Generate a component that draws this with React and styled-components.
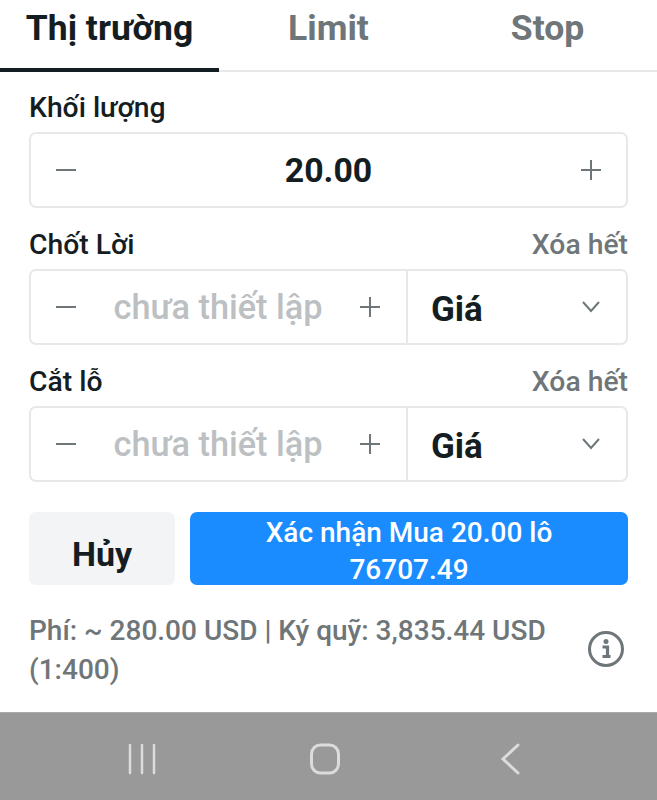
import React from "react";
import styled, { createGlobalStyle } from "styled-components";

const Global = createGlobalStyle`
  html, body { margin: 0; padding: 0; background: #fff; }
  * { box-sizing: border-box; }
`;
const Page = styled.div`
  width: 657px; height: 800px; display: flex; flex-direction: column;
  font-family: Roboto, "Noto Sans", sans-serif; color: #141d22; overflow: hidden; background: #fff;
`;
const Tabs = styled.div`
  display: grid; grid-template-columns: repeat(3, 1fr); height: 72px; border-bottom: 2px solid #e6e8ea;
`;
const Tab = styled.div`
  height: 72px; padding-top: 6px; text-align: center; font-size: 35.5px; line-height: 44px; font-weight: 700;
  color: ${p => (p.$active ? "#141d22" : "#6f7679")};
  border-bottom: ${p => (p.$active ? "4px solid #141d22" : "none")};
`;
const Content = styled.div`
  flex: 1; padding: 16px 29px 0; display: flex; flex-direction: column;
`;
const LabelRow = styled.div`
  display: flex; justify-content: space-between; align-items: center; height: 44px; padding: 0 0 5px 0; font-size: 28.3px; font-weight: 500;
`;
const Clear = styled.span` color: #6f7679; `;
const Box = styled.div`
  height: 76px; margin-bottom: 17px; border: 2px solid #e6e8ea; border-radius: 7px; display: flex; align-items: center;
`;
const Stepper = styled.div`
  flex: 1; height: 100%; display: flex; align-items: center; justify-content: space-between; padding: 0 ${p => p.$end}px 0 24px;
`;
const Value = styled.span` font-size: 33.8px; font-weight: 700; `;
const Placeholder = styled.span` font-size: 34.3px; font-weight: 500; color: #bcc0c2; `;
const Select = styled.div`
  width: 220px; height: 100%; border-left: 2px solid #e6e8ea; display: flex; align-items: center; justify-content: space-between;
  padding: 0 25px 0 23px; font-size: 35px; font-weight: 700;
`;
const SelectText = styled.span` padding-top: 5px; `;
const Actions = styled.div` display: flex; gap: 15px; margin-top: 13px; `;
const Cancel = styled.div`
  width: 146px; height: 73px; padding-top: 10px; border-radius: 7px; background: #f3f4f6; display: flex; align-items: center; justify-content: center;
  font-size: 34px; font-weight: 700;
`;
const Confirm = styled.div`
  flex: 1; height: 73px; padding-top: 3px; border-radius: 7px; background: #1a8cff; color: #fff; text-align: center; font-size: 28px; font-weight: 500; line-height: 36.6px;
`;
const Footer = styled.div`
  display: flex; justify-content: space-between; align-items: center; margin-top: 27px;
`;
const Fee = styled.div` width: 530px; font-size: 28px; line-height: 38.5px; font-weight: 500; color: #6f7679; `;
const NavBar = styled.div`
  height: 88px; background: #999; display: grid; grid-template-columns: 182px 190px auto; align-items: center; justify-items: start; padding: 5px 0 0 128px; border-top: 1px solid #aaa;
`;
const InfoWrap = styled.div` margin: 0 3px 3px 0; display: flex; `;

const Minus = () => (
  <svg width="22" height="22" viewBox="0 0 22 22"><path d="M1 11h20" stroke="#6f7679" strokeWidth="2" /></svg>
);
const Plus = () => (
  <svg width="22" height="22" viewBox="0 0 22 22"><path d="M1 11h20M11 1v20" stroke="#6f7679" strokeWidth="2" /></svg>
);
const Chevron = () => (
  <svg width="20" height="14" viewBox="0 0 20 14" fill="none"><path d="M2 2l8 9 8-9" stroke="#6f7679" strokeWidth="2" /></svg>
);
const Info = () => (
  <InfoWrap>
    <svg width="38" height="38" viewBox="0 0 38 38" fill="none">
      <circle cx="19" cy="19" r="16.5" stroke="#6f7679" strokeWidth="3" />
      <circle cx="19" cy="11.5" r="2.5" fill="#6f7679" />
      <path d="M15.5 17h5v9M15.5 26.5h8" stroke="#6f7679" strokeWidth="3.2" />
    </svg>
  </InfoWrap>
);

const Field = ({ label }) => (
  <>
    <LabelRow>{label}<Clear>Xóa hết</Clear></LabelRow>
    <Box>
      <Stepper $end={25}>
        <Minus /><Placeholder>chưa thiết lập</Placeholder><Plus />
      </Stepper>
      <Select><SelectText>Giá</SelectText><Chevron /></Select>
    </Box>
  </>
);

export default function App() {
  return (
    <Page>
      <Global />
      <Tabs>
        <Tab $active>Thị trường</Tab>
        <Tab>Limit</Tab>
        <Tab>Stop</Tab>
      </Tabs>
      <Content>
        <LabelRow>Khối lượng</LabelRow>
        <Box>
          <Stepper $end={24}>
            <Minus /><Value>20.00</Value><Plus />
          </Stepper>
        </Box>
        <Field label="Chốt Lời" />
        <Field label="Cắt lỗ" />
        <Actions>
          <Cancel>Hủy</Cancel>
          <Confirm>Xác nhận Mua 20.00 lô<br />76707.49</Confirm>
        </Actions>
        <Footer>
          <Fee>Phí: ~ 280.00 USD | Ký quỹ: 3,835.44 USD (1:400)</Fee>
          <Info />
        </Footer>
      </Content>
      <NavBar>
        <svg width="28" height="32" viewBox="0 0 28 32" fill="none" stroke="#dcdcdc" strokeWidth="2.5" strokeLinecap="round"><path d="M2 2v28M14 2v28M26 2v28" /></svg>
        <svg width="30" height="32" viewBox="0 0 30 32" fill="none" stroke="#dcdcdc" strokeWidth="3"><rect x="1.5" y="2" width="27" height="28" rx="9" /></svg>
        <svg width="20" height="32" viewBox="0 0 20 32" fill="none" stroke="#dcdcdc" strokeWidth="3" strokeLinecap="round"><path d="M18 2L3 16l15 14" /></svg>
      </NavBar>
    </Page>
  );
}
